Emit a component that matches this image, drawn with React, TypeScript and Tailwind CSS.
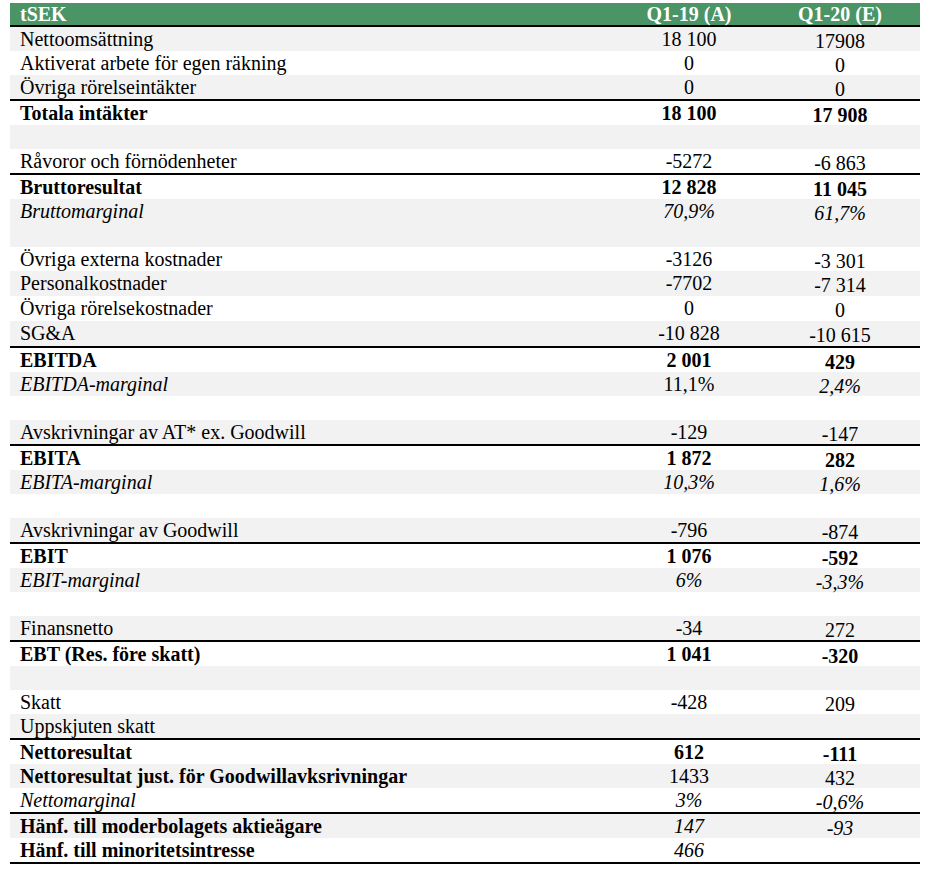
import React from "react";

type S = "n" | "b" | "i";
type Row = {
  l: string;
  a?: string;
  b?: string;
  ls?: S;
  as?: S;
  bs?: S;
  line?: boolean;
  grey?: boolean;
  tall?: boolean;
};

const rows: Row[] = [
  { l: "Nettoomsättning", a: "18 100", b: "17908", grey: true },
  { l: "Aktiverat arbete för egen räkning", a: "0", b: "0" },
  { l: "Övriga rörelseintäkter", a: "0", b: "0", grey: true },
  { l: "Totala intäkter", a: "18 100", b: "17 908", ls: "b", as: "b", bs: "b", line: true },
  { l: "", grey: true },
  { l: "Råvoror och förnödenheter", a: "-5272", b: "-6 863" },
  { l: "Bruttoresultat", a: "12 828", b: "11 045", ls: "b", as: "b", bs: "b", line: true },
  { l: "Bruttomarginal", a: "70,9%", b: "61,7%", ls: "i", as: "i", bs: "i", grey: true },
  { l: "", grey: true },
  { l: "Övriga externa kostnader", a: "-3126", b: "-3 301" },
  { l: "Personalkostnader", a: "-7702", b: "-7 314", grey: true, tall: true },
  { l: "Övriga rörelsekostnader", a: "0", b: "0", tall: true },
  { l: "SG&A", a: "-10 828", b: "-10 615", grey: true, tall: true },
  { l: "EBITDA", a: "2 001", b: "429", ls: "b", as: "b", bs: "b", line: true },
  { l: "EBITDA-marginal", a: "11,1%", b: "2,4%", ls: "i", as: "n", bs: "i", grey: true },
  { l: "" },
  { l: "Avskrivningar av AT* ex. Goodwill", a: "-129", b: "-147", grey: true },
  { l: "EBITA", a: "1 872", b: "282", ls: "b", as: "b", bs: "b", line: true },
  { l: "EBITA-marginal", a: "10,3%", b: "1,6%", ls: "i", as: "i", bs: "i", grey: true },
  { l: "" },
  { l: "Avskrivningar av Goodwill", a: "-796", b: "-874", grey: true },
  { l: "EBIT", a: "1 076", b: "-592", ls: "b", as: "b", bs: "b", line: true },
  { l: "EBIT-marginal", a: "6%", b: "-3,3%", ls: "i", as: "i", bs: "i", grey: true },
  { l: "" },
  { l: "Finansnetto", a: "-34", b: "272", grey: true },
  { l: "EBT (Res. före skatt)", a: "1 041", b: "-320", ls: "b", as: "b", bs: "b", line: true },
  { l: "", grey: true },
  { l: "Skatt", a: "-428", b: "209" },
  { l: "Uppskjuten skatt", grey: true },
  { l: "Nettoresultat", a: "612", b: "-111", ls: "b", as: "b", bs: "b", line: true },
  { l: "Nettoresultat just. för Goodwillavksrivningar", a: "1433", b: "432", ls: "b", grey: true },
  { l: "Nettomarginal", a: "3%", b: "-0,6%", ls: "i", as: "i", bs: "i" },
  { l: "Hänf. till moderbolagets aktieägare", a: "147", b: "-93", ls: "b", as: "i", bs: "i", line: true, grey: true },
  { l: "Hänf. till minoritetsintresse", a: "466", ls: "b", as: "i" },
];

function cls(s?: S) {
  if (s === "b") return "font-bold";
  if (s === "i") return "italic";
  return "";
}

export default function App() {
  return (
    <div
      className="bg-white w-[934px] h-[878px] pt-[3px] pl-[10px] text-black"
      style={{ fontFamily: '"Liberation Serif", "Times New Roman", serif' }}
    >
      <div className="w-[910px] text-[20px] leading-[24px]">
        <div className="flex h-[22px] items-center bg-[#4a9466] text-white font-bold leading-[22px]">
          <div className="flex-1 pl-[10px]">tSEK</div>
          <div className="w-[154px] text-center">Q1-19 (A)</div>
          <div className="w-[148px] text-center">Q1-20 (E)</div>
          <div className="w-[6px]" />
        </div>
        <div className="h-[2px] bg-black" />
        {rows.map((r, i) => (
          <React.Fragment key={i}>
            {r.line && <div className="h-[2px] bg-black" />}
            <div
              className={`flex ${r.tall ? "h-[25px]" : "h-[24px]"} ${r.grey ? "bg-[#f2f2f2]" : "bg-white"}`}
            >
              <div className={`flex-1 pl-[10px] whitespace-nowrap ${cls(r.ls)}`}>{r.l}</div>
              <div className={`w-[154px] text-center whitespace-nowrap ${cls(r.as)}`}>{r.a ?? ""}</div>
              <div className={`w-[148px] text-center whitespace-nowrap pt-[2px] ${cls(r.bs)}`}>{r.b ?? ""}</div>
              <div className="w-[6px]" />
            </div>
          </React.Fragment>
        ))}
        <div className="h-[2px] bg-black" />
      </div>
    </div>
  );
}
